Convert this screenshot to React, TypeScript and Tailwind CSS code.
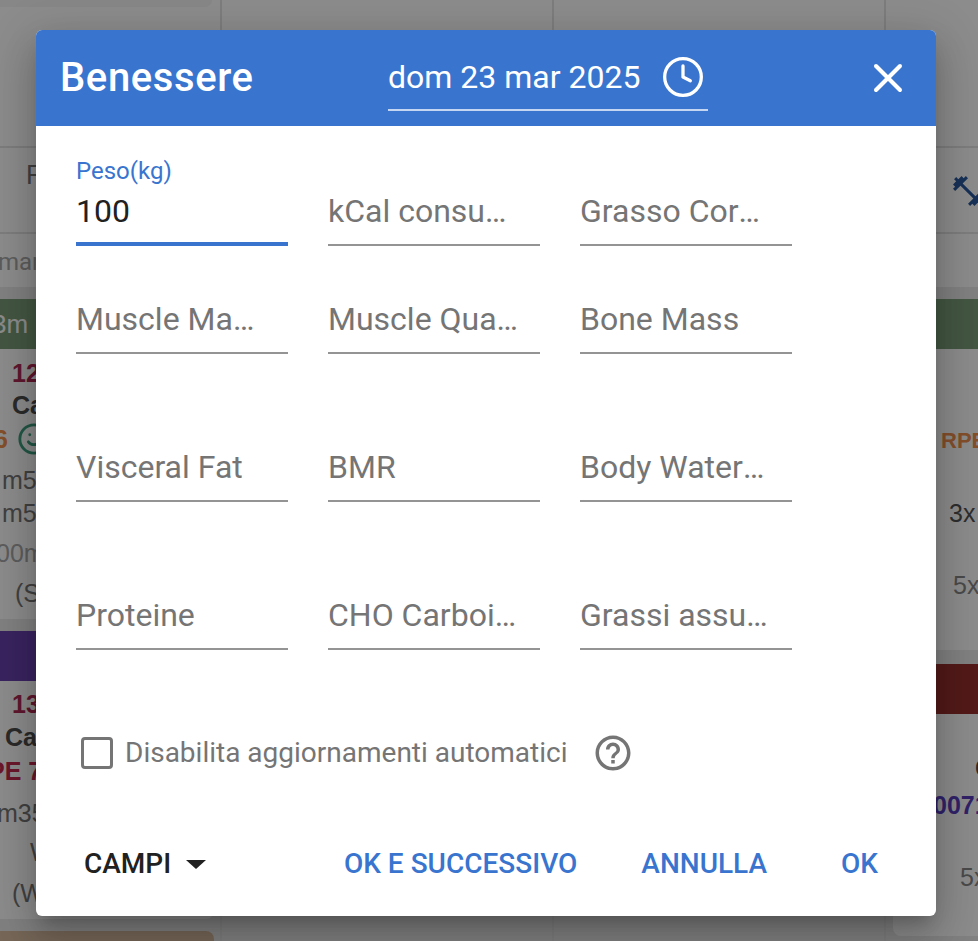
import { Clock, Smile, X } from "lucide-react";

type Line = { text: string; className: string };

// One training card of the calendar behind the dialog
function Card({ header, headerClass, lines, className }: { header?: string; headerClass: string; lines: Line[]; className: string }) {
  return (
    <div className={`bg-white rounded-lg overflow-hidden font-['Liberation_Sans',sans-serif] ${className}`}>
      <div className={`h-[50px] text-[26px] leading-[50px] text-white whitespace-nowrap ${headerClass}`}>{header}</div>
      {lines.map((l, i) => (
        <div key={i} className={`h-[32px] text-[25px] leading-[32px] whitespace-nowrap ${l.className}`}>{l.text}</div>
      ))}
    </div>
  );
}

function Field({ label, value, active }: { label: string; value?: string; active?: boolean }) {
  return (
    <div className="w-[212px]">
      <div className={`h-[44px] flex flex-col justify-end ${active ? "border-b-[4px] border-[#3975cf]" : "border-b-2 border-[#949494]"}`}>
        {active ? (
          <div className="relative pb-[14px] text-[32px] leading-[34px] text-[#212121]">
            <span className="absolute left-0 -top-[37px] text-[24px] leading-[28px] text-[#3975cf]">{label}</span>
            {value}
          </div>
        ) : (
          <div className="w-[191px] shrink-0 truncate pb-[16px] text-[32px] leading-[34px] text-[#757575]">{label}</div>
        )}
      </div>
    </div>
  );
}

export default function App() {
  return (
    <div className="relative h-[941px] w-[978px] overflow-hidden bg-white font-['Roboto',sans-serif]">
      {/* Calendar page behind the dialog */}
      <div className="flex flex-col h-full">
        <div className="h-[148px] shrink-0 border-b-2 border-[#e4e4e4] flex">
          <div className="w-[222px] border-r-2 border-[#e4e4e4]">
            <div className="w-[212px] h-[7px] rounded-br-xl bg-[#f6f6f6]"></div>
          </div>
          <div className="w-[332px] border-r-2 border-[#e4e4e4]"></div>
          <div className="w-[332px] border-r-2 border-[#e4e4e4]"></div>
        </div>
        <div className="h-[86px] shrink-0 border-b-2 border-[#e4e4e4] flex items-center justify-between text-[#777] text-[26px]">
          <span className="pl-[26px] -mt-[30px]">F</span>
          <svg viewBox="0 0 24 24" className="w-[36px] h-[36px] -mr-[8px] mt-[2px] text-[#2b5a9e]" fill="currentColor">
            <path d="M20.57 14.86 22 13.43 20.57 12 17 15.57 8.43 7 12 3.43 10.57 2 9.14 3.43 7.71 2 5.57 4.14 4.14 2.71 2.71 4.14l1.43 1.43L2 7.71l1.43 1.43L2 10.57 3.43 12 7 8.43 15.57 17 12 20.57 13.43 22l1.43-1.43L16.29 22l2.14-2.14 1.43 1.43 1.43-1.43-1.43-1.43L22 16.29z" />
          </svg>
        </div>
        <div className="h-[53px] shrink-0 text-[24px] text-[#aaa]">
          <span className="block -ml-[2px] mt-[10px]">mar</span>
        </div>
        <div className="flex-1 flex bg-[#ececec] pt-[12px]">
          <div className="w-[222px] shrink-0 border-r-2 border-[#e4e4e4]">
            <div className="-ml-[104px] w-[318px] flex flex-col gap-[12px]">
              <Card
                header="3m"
                headerClass="bg-[#7d9f7a] pl-[96px]"
                className="h-[320px]"
                lines={[
                  { text: "12:00", className: "mt-[8px] ml-[116px] font-bold text-[#b02a55]" },
                  { text: "Cardio", className: "ml-[116px] font-bold text-[#4d4d4d]" },
                  { text: "6", className: "mt-[2px] ml-[98px] font-bold text-[#f0904f]" },
                  { text: "m50", className: "mt-[9px] ml-[106px] text-[#777]" },
                  { text: "m50", className: "mt-[1px] ml-[106px] text-[#777]" },
                  { text: "00m", className: "mt-[8px] ml-[100px] text-[#aaa]" },
                  { text: "(Sal", className: "mt-[8px] ml-[119px] text-[#777]" },
                ]}
              />
              <Card
                headerClass="bg-[#6a43b0]"
                className="h-[288px]"
                lines={[
                  { text: "13:30", className: "mt-[7px] ml-[116px] font-bold text-[#b02a55]" },
                  { text: "Cardio", className: "mt-[1px] ml-[109px] font-bold text-[#4d4d4d]" },
                  { text: "PE 7", className: "mt-[2px] ml-[92px] font-bold text-[#c42a50]" },
                  { text: "m35", className: "mt-[10px] ml-[101px] text-[#777]" },
                  { text: "W", className: "mt-[7px] ml-[134px] text-[#777]" },
                  { text: "(W", className: "mt-[9px] ml-[116px] text-[#777]" },
                ]}
              />
              <div className="h-[60px] rounded-lg bg-[#d8bca0]"></div>
            </div>
          </div>
          <div className="w-[332px] shrink-0 border-r-2 border-[#e4e4e4]"></div>
          <div className="w-[332px] shrink-0 border-r-2 border-[#e4e4e4]"></div>
          <div className="w-[320px] shrink-0 ml-[7px] flex flex-col gap-[14px]">
            <Card
              headerClass="bg-[#7d9f7a]"
              className="h-[351px]"
              lines={[
                { text: "RPE 7", className: "mt-[76px] ml-[48px] font-bold text-[22px]! text-[#f0904f]" },
                { text: "3x 10", className: "mt-[40px] ml-[56px] text-[#555]" },
                { text: "5x 20", className: "mt-[40px] ml-[60px] text-[#888]" },
              ]}
            />
            <Card
              headerClass="bg-[#97302f]"
              className="h-[272px]"
              lines={[
                { text: "C", className: "mt-[38px] ml-[82px] font-bold text-[#4d4d4d]" },
                { text: "00712", className: "mt-[5px] ml-[40px] font-bold text-[#5a3fc0]" },
                { text: "5x 20", className: "mt-[40px] ml-[67px] text-[#888]" },
              ]}
            />
          </div>
        </div>
      </div>

      {/* Smiley next to the RPE value */}
      <Smile className="absolute left-[17px] top-[422px] w-[34px] h-[34px] text-[#3f9f80]" strokeWidth={2} />

      {/* Backdrop */}
      <div className="absolute inset-0 bg-black/45"></div>

      {/* Dialog */}
      <div className="absolute left-[36px] top-[30px] h-[886px] w-[900px] rounded-[6px] bg-white shadow-[0_11px_15px_-7px_rgba(0,0,0,0.2),0_24px_38px_3px_rgba(0,0,0,0.14),0_9px_46px_8px_rgba(0,0,0,0.12)] flex flex-col overflow-hidden">
        <div className="h-[96px] shrink-0 bg-[#3975cf] flex items-center text-white">
          <div className="w-[352px] pl-[24px] text-[40px] font-medium tracking-[0.6px]">Benessere</div>
          <div className="w-[320px] h-[66px] border-b-2 border-white/70 flex items-center">
            <span className="text-[32px] whitespace-nowrap">dom 23 mar 2025</span>
            <Clock className="ml-[21px] w-[44px] h-[44px]" strokeWidth={1.8} />
          </div>
          <X className="ml-auto mr-[24px] w-[48px] h-[48px]" strokeWidth={2} />
        </div>
        <div className="flex-1 flex flex-col px-[40px] pt-[76px]">
          <div className="flex gap-[40px]">
            <Field label="Peso(kg)" value="100" active />
            <Field label="kCal consumate" />
            <Field label="Grasso Corporeo" />
          </div>
          <div className="flex gap-[40px] mt-[64px]">
            <Field label="Muscle Mass(kg)" />
            <Field label="Muscle Quality" />
            <Field label="Bone Mass" />
          </div>
          <div className="flex gap-[40px] mt-[104px]">
            <Field label="Visceral Fat" />
            <Field label="BMR" />
            <Field label="Body Water(%)" />
          </div>
          <div className="flex gap-[40px] mt-[104px]">
            <Field label="Proteine" />
            <Field label="CHO Carboidrati" />
            <Field label="Grassi assunti" />
          </div>
          <div className="flex items-center mt-[82px] ml-[5px]">
            <span className="w-[32px] h-[32px] rounded-[4px] border-[3px] border-[#757575]"></span>
            <span className="ml-[12px] text-[28px] text-[#757575]">Disabilita aggiornamenti automatici</span>
            <svg viewBox="0 0 24 24" className="ml-[24px] w-[42px] h-[42px]" fill="#757575">
              <path d="M11 18h2v-2h-2v2zm1-16C6.48 2 2 6.48 2 12s4.48 10 10 10 10-4.480 10-10S17.520 2 12 2zm0 18c-4.410 0-8-3.590-8-8s3.590-8 8-8 8 3.590 8 8-3.590 8-8 8zm0-14c-2.210 0-4 1.790-4 4h2c0-1.100.9-2 2-2s2 .9 2 2c0 2-3 1.750-3 5h2c0-2.250 3-2.500 3-5 0-2.210-1.790-4-4-4z" />
            </svg>
          </div>
          <div className="flex items-center mt-[69px] text-[28px] font-medium">
            <span className="ml-[8px] text-[#212121]">CAMPI</span>
            <span className="ml-[15px] w-0 h-0 border-x-[10px] border-x-transparent border-t-[9px] border-t-[#212121]"></span>
            <span className="ml-auto text-[#3975cf]">OK E SUCCESSIVO</span>
            <span className="ml-[64px] text-[#3975cf]">ANNULLA</span>
            <span className="ml-[74px] mr-[18px] text-[#3975cf]">OK</span>
          </div>
        </div>
      </div>
    </div>
  );
}
